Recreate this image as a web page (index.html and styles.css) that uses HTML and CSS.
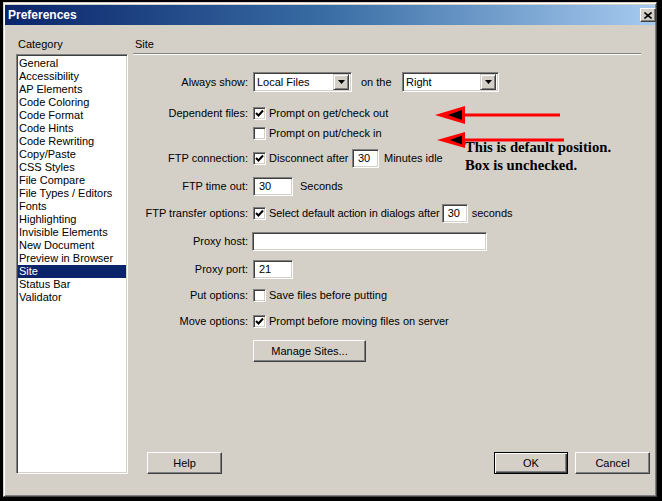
FILE: index.html
```html
<!DOCTYPE html>
<html>
<head>
<meta charset="utf-8">
<title>Preferences</title>
<link rel="stylesheet" href="styles.css">
</head>
<body>
<div class="screen">
  <div class="window">
    <div class="titlebar">
      <span class="title">Preferences</span>
      <span class="close"><svg width="8" height="7" viewBox="0 0 8 7"><path d="M0.5 0.5L7.5 6.5M7.5 0.5L0.5 6.5" stroke="#000" stroke-width="1.6" fill="none"/></svg></span>
    </div>
    <div class="main">
      <div class="cat-col">
        <div class="caption">Category</div>
        <ul class="listbox">
          <li>General</li>
          <li>Accessibility</li>
          <li>AP Elements</li>
          <li>Code Coloring</li>
          <li>Code Format</li>
          <li>Code Hints</li>
          <li>Code Rewriting</li>
          <li>Copy/Paste</li>
          <li>CSS Styles</li>
          <li>File Compare</li>
          <li>File Types / Editors</li>
          <li>Fonts</li>
          <li>Highlighting</li>
          <li>Invisible Elements</li>
          <li>New Document</li>
          <li>Preview in Browser</li>
          <li class="selected">Site</li>
          <li>Status Bar</li>
          <li>Validator</li>
        </ul>
      </div>
      <div class="site-col">
        <div class="caption site-caption">Site</div>
        <div class="groove"></div>
        <div class="form">
          <div class="row row-first">
            <span class="label">Always show:</span>
            <span class="select sel-local"><span class="sel-text">Local Files</span><span class="drop"><svg width="7" height="4" viewBox="0 0 7 4"><path d="M0 0H7L3.5 4Z" fill="#000"/></svg></span></span>
            <span class="on-the">on the</span>
            <span class="select sel-right"><span class="sel-text">Right</span><span class="drop"><svg width="7" height="4" viewBox="0 0 7 4"><path d="M0 0H7L3.5 4Z" fill="#000"/></svg></span></span>
          </div>
          <div class="row row-dep">
            <span class="label">Dependent files:</span>
            <span class="checkbox checked"><svg width="9" height="9" viewBox="0 0 9 9"><path d="M1 4L3.5 6.5L8 1.5" stroke="#000" stroke-width="2" fill="none"/></svg></span>
            <span class="cb-text">Prompt on get/check out</span>
          </div>
          <div class="row row-put">
            <span class="label"></span>
            <span class="checkbox"></span>
            <span class="cb-text">Prompt on put/check in</span>
          </div>
          <div class="row row-ftpc">
            <span class="label">FTP connection:</span>
            <span class="checkbox checked"><svg width="9" height="9" viewBox="0 0 9 9"><path d="M1 4L3.5 6.5L8 1.5" stroke="#000" stroke-width="2" fill="none"/></svg></span>
            <span class="cb-text disconnect">Disconnect after</span>
            <span class="field f-mins">30</span>
            <span class="after-text mins">Minutes idle</span>
          </div>
          <div class="row row-timeout">
            <span class="label">FTP time out:</span>
            <span class="field f-timeout">30</span>
            <span class="after-text secs">Seconds</span>
          </div>
          <div class="row row-transfer">
            <span class="label">FTP transfer options:</span>
            <span class="checkbox checked"><svg width="9" height="9" viewBox="0 0 9 9"><path d="M1 4L3.5 6.5L8 1.5" stroke="#000" stroke-width="2" fill="none"/></svg></span>
            <span class="cb-text select-default">Select default action in dialogs after</span>
            <span class="field f-dialog">30</span>
            <span class="after-text secs2">seconds</span>
          </div>
          <div class="row row-host">
            <span class="label">Proxy host:</span>
            <span class="field f-host"></span>
          </div>
          <div class="row row-port">
            <span class="label">Proxy port:</span>
            <span class="field f-port">21</span>
          </div>
          <div class="row row-putopt">
            <span class="label">Put options:</span>
            <span class="checkbox"></span>
            <span class="cb-text">Save files before putting</span>
          </div>
          <div class="row row-move">
            <span class="label">Move options:</span>
            <span class="checkbox checked"><svg width="9" height="9" viewBox="0 0 9 9"><path d="M1 4L3.5 6.5L8 1.5" stroke="#000" stroke-width="2" fill="none"/></svg></span>
            <span class="cb-text">Prompt before moving files on server</span>
          </div>
          <div class="row row-manage">
            <span class="label"></span>
            <span class="button btn-manage">Manage Sites...</span>
          </div>
        </div>
        <div class="dlg-buttons">
          <span class="button btn-help">Help</span>
          <span class="button btn-ok">OK</span>
          <span class="button btn-cancel">Cancel</span>
        </div>
      </div>
    </div>
  </div>
  <svg class="arrows" width="140" height="55" viewBox="0 0 140 55">
    <path d="M4 15L34 6V24Z" fill="#ff0000"/>
    <path d="M17 15L31 10V20Z" fill="#000"/>
    <rect x="33" y="13.5" width="96" height="3" fill="#ff0000"/>
    <path d="M6 40L34 32V48Z" fill="#ff0000"/>
    <path d="M19 40L31 35.5V44.5Z" fill="#000"/>
    <rect x="33" y="38.5" width="100" height="3" fill="#ff0000"/>
  </svg>
  <div class="note">This is default position.<br>Box is unchecked.</div>
</div>
</body>
</html>
```

FILE: styles.css
```css
html, body {
  margin: 0;
  padding: 0;
  background: #000;
}

body {
  font-family: "Liberation Sans", Arial, sans-serif;
  font-size: 11px;
  color: #000;
}

.screen {
  position: relative;
  width: 662px;
  height: 501px;
  box-sizing: border-box;
  background: #000;
  padding: 2px 5px 4px 3px;
}

.window {
  height: 100%;
  box-sizing: border-box;
  background: #d4d0c8;
  border: 1px solid;
  border-color: #d4d0c8 #404040 #404040 #d4d0c8;
  box-shadow: inset 1px 1px #fff, inset -1px -1px #808080;
  padding: 2px 1px 1px 1px;
}

.titlebar {
  height: 20px;
  display: flex;
  align-items: center;
  justify-content: space-between;
  padding: 0 0 0 3px;
  background: linear-gradient(to right, #0a246a 0%, #3a6ea5 50%, #a6caf0 100%);
}

.title {
  color: #fff;
  font-weight: bold;
  font-size: 12px;
}

.close {
  width: 16px;
  height: 14px;
  box-sizing: border-box;
  display: flex;
  align-items: center;
  justify-content: center;
  background: #d4d0c8;
  border: 1px solid;
  border-color: #fff #404040 #404040 #fff;
  box-shadow: inset -1px -1px #808080;
  margin-right: -1px;
}

.main {
  display: grid;
  grid-template-columns: 112px 517px;
  column-gap: 5px;
  padding: 13px 0 0 11px;
}

.caption {
  line-height: 13px;
  height: 13px;
  padding-left: 2px;
}

.site-caption {
  padding-left: 2px;
}

.listbox {
  list-style: none;
  margin: 3px 0 0 0;
  padding: 2px 0 1px 0;
  height: 420px;
  box-sizing: border-box;
  background: #fff;
  border: 1px solid;
  border-color: #808080 #fff #fff #808080;
  box-shadow: inset 1px 1px #404040, inset -1px -1px #d4d0c8;
  overflow: hidden;
}

.listbox li {
  line-height: 13px;
  height: 13px;
  padding-left: 1px;
  margin: 0 1px;
  white-space: nowrap;
}

.listbox li.selected {
  background: #0a246a;
  color: #fff;
}

.site-col {
  display: flex;
  flex-direction: column;
}

.groove {
  margin-top: 2px;
  margin-right: 9px;
  border-top: 1px solid #808080;
  border-bottom: 1px solid #fff;
}

.form {
  display: flex;
  flex-direction: column;
  margin-top: 17px;
}

.row {
  display: flex;
  align-items: center;
  height: 20px;
  white-space: nowrap;
}

.row-dep { margin-top: 11px; }
.row-put { margin-top: 0; }
.row-ftpc { margin-top: 5px; }
.row-timeout { margin-top: 8px; }
.row-transfer { margin-top: 7px; }
.row-host { margin-top: 8px; }
.row-port { margin-top: 8px; }
.row-putopt { margin-top: 6px; }
.row-move { margin-top: 6px; }
.row-manage { margin-top: 9px; height: 22px; }

.label {
  width: 115px;
  margin-right: 5px;
  text-align: right;
  flex: none;
}

.select {
  display: flex;
  align-items: center;
  justify-content: space-between;
  height: 20px;
  box-sizing: border-box;
  background: #fff;
  border: 1px solid;
  border-color: #808080 #fff #fff #808080;
  box-shadow: inset 1px 1px #404040, inset -1px -1px #d4d0c8;
  padding: 2px 2px 2px 3px;
}

.sel-local { width: 99px; }
.sel-right { width: 97px; }

.drop {
  width: 16px;
  height: 16px;
  box-sizing: border-box;
  display: flex;
  align-items: center;
  justify-content: center;
  background: #d4d0c8;
  border: 1px solid;
  border-color: #d4d0c8 #404040 #404040 #d4d0c8;
  box-shadow: inset 1px 1px #fff, inset -1px -1px #808080;
}

.on-the {
  display: inline-block;
  width: 41px;
  margin-left: 9px;
}

.checkbox {
  width: 13px;
  height: 13px;
  box-sizing: border-box;
  flex: none;
  display: flex;
  align-items: center;
  justify-content: center;
  background: #fff;
  border: 1px solid;
  border-color: #808080 #fff #fff #808080;
  box-shadow: inset 1px 1px #404040, inset -1px -1px #d4d0c8;
}

.cb-text {
  margin-left: 3px;
}

.disconnect {
  width: 83px;
}

.select-default {
  letter-spacing: -0.08px;
  margin-right: 2px;
}

.field {
  display: flex;
  align-items: center;
  height: 19px;
  box-sizing: border-box;
  background: #fff;
  border: 1px solid;
  border-color: #808080 #fff #fff #808080;
  box-shadow: inset 1px 1px #404040, inset -1px -1px #d4d0c8;
  padding-left: 5px;
  flex: none;
}

.f-mins { width: 27px; }
.f-timeout { width: 40px; }
.f-dialog { width: 26px; height: 19px; }
.f-host { width: 235px; margin-left: -1px; }
.f-port { width: 40px; }

.mins { margin-left: 5px; }
.secs { margin-left: 7px; }
.secs2 { margin-left: 4px; }

.button {
  display: flex;
  align-items: center;
  justify-content: center;
  height: 22px;
  box-sizing: border-box;
  background: #d4d0c8;
  border: 1px solid;
  border-color: #fff #404040 #404040 #fff;
  box-shadow: inset -1px -1px #808080;
  flex: none;
}

.btn-manage { width: 113px; }

.dlg-buttons {
  display: flex;
  margin-top: auto;
  height: 22px;
}

.btn-help {
  width: 75px;
  margin-left: 14px;
}

.btn-ok {
  width: 74px;
  margin-left: auto;
  border-color: #000;
  box-shadow: inset 1px 1px #fff, inset -1px -1px #404040, inset -2px -2px #808080;
}

.btn-cancel {
  width: 75px;
  margin-left: 7px;
}

.arrows {
  position: absolute;
  left: 431px;
  top: 100px;
}

.note {
  position: absolute;
  left: 465px;
  top: 138px;
  font-family: "Liberation Serif", "Times New Roman", serif;
  font-weight: bold;
  font-size: 14.7px;
  line-height: 18px;
  color: #000;
  white-space: nowrap;
}
```
